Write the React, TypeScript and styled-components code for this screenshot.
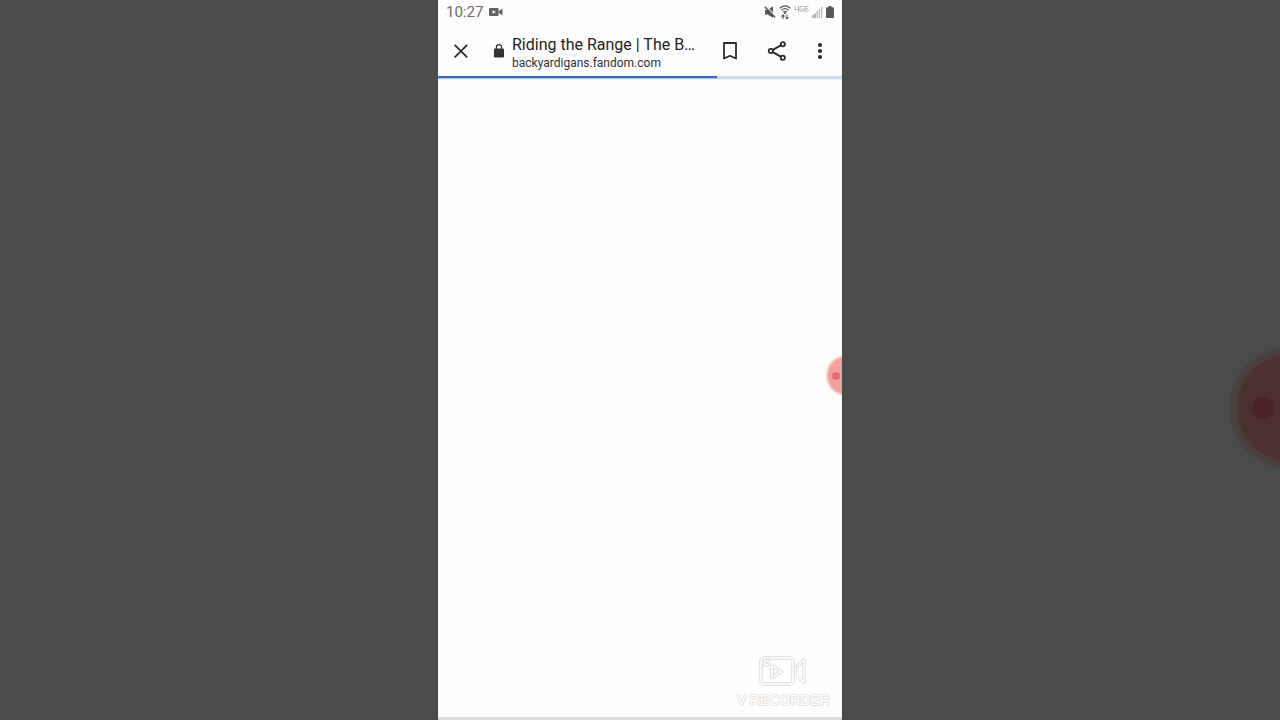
import React from "react";
import styled, { createGlobalStyle } from "styled-components";

const GlobalStyle = createGlobalStyle`
  * { box-sizing: border-box; }
  body { margin: 0; background: #4b4b4b; font-family: Roboto, "Liberation Sans", sans-serif; }
`;

const Stage = styled.main`
  position: relative;
  display: flex;
  justify-content: center;
  height: 100vh;
  overflow: hidden;
  background: #4b4b4b;
`;

const Phone = styled.section`
  position: relative;
  display: flex;
  flex-direction: column;
  height: 100%;
  aspect-ratio: 101 / 180;
  overflow: hidden;
  background: #fefefe;
`;

const StatusBar = styled.div`
  display: flex;
  align-items: center;
  justify-content: space-between;
  height: 24px;
  padding: 0 8px;
  color: #6a6a6a;
`;

const StatusGroup = styled.div<{ $gap: number }>`
  display: flex;
  align-items: center;
  gap: ${(p) => p.$gap}px;
`;

const Time = styled.time`
  font-size: 15px;
  line-height: 24px;
`;

const Toolbar = styled.header`
  display: flex;
  align-items: center;
  height: 52px;
  padding: 2px 3px 0 8px;
  color: #2b2b2b;
`;

const IconButton = styled.button<{ $width: number }>`
  display: flex;
  flex: none;
  align-items: center;
  justify-content: center;
  width: ${(p) => p.$width}px;
  height: 40px;
  padding: 0;
  border: 0;
  background: none;
  color: inherit;
`;

const Site = styled.div`
  display: flex;
  flex: 1;
  align-items: center;
  gap: 8px;
  min-width: 0;
  padding-left: 18px;
`;

const SiteText = styled.div`
  display: flex;
  flex-direction: column;
  padding-top: 4px;
  white-space: nowrap;
`;

const Title = styled.h1`
  margin: 0;
  font-size: 16px;
  font-weight: 400;
  line-height: 20px;
  color: #222;
`;

const Domain = styled.span`
  font-size: 12px;
  line-height: 16px;
  color: #333;
`;

const Progress = styled.div`
  height: 4px;
  border-bottom: 1px solid #eef2f9;
  background: #d0daec;
`;

const ProgressFill = styled.div<{ $percent: number }>`
  width: ${(p) => p.$percent}%;
  height: 100%;
  border-bottom: 1px solid #a5c8ef;
  background: #346fbd;
`;

const Content = styled.div`
  display: flex;
  flex: 1;
  align-items: flex-end;
  justify-content: flex-end;
  padding: 0 12px 9px 0;
  border-bottom: 3px solid #dcdcdc;
`;

const Watermark = styled.div`
  display: flex;
  flex-direction: column;
  align-items: center;
  gap: 6px;
`;

const WatermarkText = styled.span`
  font-family: "Liberation Sans", Arial, sans-serif;
  font-size: 14px;
  line-height: 16px;
  color: #fff;
  text-shadow: 1px 0 #dedede, -1px 0 #e6e6e6, 0 1px #dedede, 0 -1px #e6e6e6;
`;

const RecordBubble = styled.button<{ $dim?: boolean }>`
  position: absolute;
  top: ${(p) => (p.$dim ? "347px" : "355px")};
  right: ${(p) => (p.$dim ? "-72px" : "-25px")};
  display: flex;
  align-items: center;
  width: ${(p) => (p.$dim ? 122 : 41)}px;
  height: ${(p) => (p.$dim ? 122 : 41)}px;
  padding: 0 0 0 ${(p) => (p.$dim ? 15 : 4)}px;
  border: ${(p) => (p.$dim ? "7px solid #4a403e" : "2px solid #f4ccc5")};
  border-radius: 50%;
  background: ${(p) => (p.$dim ? "#4b312e" : "#f3a197")};
  filter: blur(${(p) => (p.$dim ? 1 : 0)}px);
`;

const RecordDot = styled.span<{ $dim?: boolean }>`
  width: ${(p) => (p.$dim ? 22 : 8)}px;
  height: ${(p) => (p.$dim ? 22 : 8)}px;
  border-radius: 50%;
  background: ${(p) => (p.$dim ? "#4d212a" : "#ee6878")};
`;

const CameraIcon = () => (
  <svg width="14" height="10" viewBox="0 0 14 10" aria-hidden="true">
    <rect x="0" y="1" width="9.6" height="8" rx="1" fill="#606060" />
    <path d="M10 4l3.4-2.4v6.8L10 6z" fill="#606060" />
    <path d="M3.6 3.2v3.6L7 5z" fill="#fff" />
  </svg>
);

const MuteIcon = () => (
  <svg width="12" height="14" viewBox="0 0 12 14" aria-hidden="true">
    <path d="M1 5h2.6L9 1.2v11.6L3.6 9.4H1z" fill="#555" />
    <path d="M1.600 .8l10.4 10.8" stroke="#fefefe" strokeWidth="1.200" />
    <path d="M.8 1.800l10.4 10.8" stroke="#555" strokeWidth="1.400" />
  </svg>
);

const WifiIcon = () => (
  <svg width="12" height="16" viewBox="0 0 12 16" fill="none" stroke="#5c5c5c" aria-hidden="true">
    <path d="M.8 4.2Q6-.4 11.2 4.2M2.5 6.2q3.5-3 7 0M4.2 8q1.8-1.4 3.6 0" strokeWidth="1.3" />
    <circle cx="6" cy="9" r=".6" fill="#5c5c5c" />
    <path d="M4 15v-4M2.5 12.5L4 11l1.500 1.500M8 10.800v4M6.500 13.300L8 14.800l1.500-1.500" strokeWidth="1.1" />
  </svg>
);

const NetworkIcon = () => (
  <svg width="15" height="9" viewBox="0 0 15 9" fill="none" stroke="#b2b2b2" aria-hidden="true">
    <path d="M1 1v3.500h3.500M4.500 1v6M9.500 1.500H6v4.500h3.500V4H8M11 1v5.500M11 1.500h3.500M11 3.700h3M11 6h3.500" strokeWidth="1" />
  </svg>
);

const SignalIcon = () => (
  <svg width="11" height="12" viewBox="0 0 11 12" fill="none" aria-hidden="true">
    <path d="M1 9v3M3 7.500V12" stroke="#888" strokeWidth="1.200" />
    <path d="M5.200 5v7M7.400 3v9M9.600 1v11" stroke="#b5b5b5" strokeWidth="1.200" />
  </svg>
);

const BatteryIcon = () => (
  <svg width="8" height="12" viewBox="0 0 8 12" aria-hidden="true">
    <path d="M2.500 0h3v1.300H7q1 0 1 1V11q0 1-1 1H1q-1 0-1-1V2.300q0-1 1-1h1.500z" fill="#595959" />
  </svg>
);

const NetworkSlot = styled.span`
  display: flex;
  height: 14px;
`;

const CloseIcon = () => (
  <svg width="14" height="14" viewBox="0 0 14 14" aria-hidden="true">
    <path d="M.6 .8l12.600 12.600M13.200 .8L.6 13.400" stroke="currentColor" strokeWidth="1.800" />
  </svg>
);

const LockIcon = () => (
  <svg width="10" height="14" viewBox="0 0 10 14" aria-hidden="true">
    <rect x="0" y="4.500" width="10" height="9" rx="1.200" fill="#333" />
    <path d="M2.400 5V3.300a2.600 2.600 0 0 1 5.200 0V5" fill="none" stroke="#333" strokeWidth="1.300" />
  </svg>
);

const BookmarkIcon = () => (
  <svg width="14" height="18" viewBox="0 0 14 18" aria-hidden="true">
    <path d="M1 1h12v15.500l-6-2.700-6 2.700z" fill="none" stroke="currentColor" strokeWidth="1.800" strokeLinejoin="round" />
  </svg>
);

const ShareIcon = () => (
  <svg width="20" height="20" viewBox="0 0 20 20" fill="none" stroke="currentColor" strokeWidth="1.800" aria-hidden="true">
    <circle cx="3.800" cy="10" r="2.100" />
    <circle cx="15.800" cy="3.200" r="2.100" />
    <circle cx="15.800" cy="16.800" r="2.100" />
    <path d="M5.800 8.900l7.900-4.500M5.800 11.100l7.900 4.500" />
  </svg>
);

const MoreIcon = () => (
  <svg width="6" height="18" viewBox="0 0 6 18" fill="currentColor" aria-hidden="true">
    <circle cx="3" cy="3" r="2.100" />
    <circle cx="3" cy="9" r="2.100" />
    <circle cx="3" cy="15" r="2.100" />
  </svg>
);

const RecorderPaths = () => (
  <>
    <rect x="2" y="2" width="32" height="26" rx="3" />
    <path d="M36.500 11.500L45 4v22l-8.500-6.500z" />
    <path d="M13 10v11l9.500-5.500z" />
    <circle cx="7.500" cy="7" r="2" />
  </>
);

const RecorderLogo = () => (
  <svg width="48" height="30" viewBox="0 0 48 30" fill="none" strokeLinejoin="round" aria-hidden="true">
    <g stroke="#d9d9d9" strokeWidth="3.400"><RecorderPaths /></g>
    <g stroke="#fff" strokeWidth="1.600"><RecorderPaths /></g>
  </svg>
);

export default function App() {
  return (
    <>
      <GlobalStyle />
      <Stage>
        <Phone>
          <StatusBar>
            <StatusGroup $gap={6}>
              <Time>10:27</Time>
              <CameraIcon />
            </StatusGroup>
            <StatusGroup $gap={3}>
              <MuteIcon />
              <WifiIcon />
              <NetworkSlot><NetworkIcon /></NetworkSlot>
              <SignalIcon />
              <BatteryIcon />
            </StatusGroup>
          </StatusBar>
          <Toolbar>
            <IconButton $width={30} aria-label="Close tab"><CloseIcon /></IconButton>
            <Site>
              <LockIcon />
              <SiteText>
                <Title>Riding the Range | The B…</Title>
                <Domain>backyardigans.fandom.com</Domain>
              </SiteText>
            </Site>
            <IconButton $width={48} aria-label="Bookmark"><BookmarkIcon /></IconButton>
            <IconButton $width={46} aria-label="Share"><ShareIcon /></IconButton>
            <IconButton $width={39} aria-label="More options"><MoreIcon /></IconButton>
          </Toolbar>
          <Progress role="progressbar" aria-label="Page loading" aria-valuenow={69}>
            <ProgressFill $percent={69} />
          </Progress>
          <Content>
            <Watermark>
              <RecorderLogo />
              <WatermarkText>V RECORDER</WatermarkText>
            </Watermark>
          </Content>
          <RecordBubble aria-label="Recording controls"><RecordDot /></RecordBubble>
        </Phone>
        <RecordBubble $dim aria-hidden="true" tabIndex={-1}><RecordDot $dim /></RecordBubble>
      </Stage>
    </>
  );
}
